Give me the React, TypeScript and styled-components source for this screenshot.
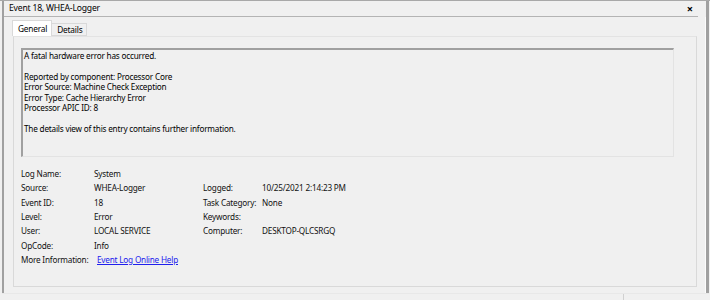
import React from "react";
import styled, { createGlobalStyle } from "styled-components";

const Global = createGlobalStyle`
  html, body { margin: 0; padding: 0; background: #f0f0f0; }
  body { font-family: "Noto Sans", "Open Sans", sans-serif; color: #000; }
`;

const Window = styled.div`
  width: 710px;
  height: 300px;
  box-sizing: border-box;
  background: #f0f0f0;
  display: flex;
  flex-direction: column;
  padding-left: 2px;
  padding-right: 1px;
  border-top: 1px solid #a8a8a8;
  overflow: hidden;
`;

const Frame = styled.div`
  flex: 0 0 292px;
  box-sizing: border-box;
  border-left: 2px solid #a0a0a0;
  border-right: 3px solid #a0a0a0;
  display: flex;
  flex-direction: column;
`;

const Header = styled.div`
  height: 15px;
  margin-right: 8px;
  border-bottom: 1px solid #b4b4b4;
  display: flex;
  align-items: center;
  justify-content: space-between;
  padding: 0 5px 0 5px;
`;

const Title = styled.span`
  font-size: 8.6px;
  letter-spacing: -0.2px;
  line-height: 15px;
  color: #000;
`;

const Close = styled.span`
  font-size: 11px;
  font-weight: bold;
  line-height: 12px;
  color: #000;
`;

const Body = styled.div`
  flex: 1;
  display: flex;
  flex-direction: column;
  padding: 3px 8px 6px 8px;
  border-right: 1px solid #fcfcfc;
`;

const TabRow = styled.div`
  display: flex;
  align-items: flex-end;
  height: 16px;
`;

const Tab = styled.div<{ $active?: boolean }>`
  font-size: 8.3px;
  letter-spacing: -0.2px;
  line-height: 12px;
  padding: 0 4px 0 5px;
  height: ${(p) => (p.$active ? "16px" : "13px")};
  display: flex;
  align-items: center;
  box-sizing: border-box;
  background: ${(p) => (p.$active ? "#ffffff" : "#f0f0f0")};
  border: 1px solid #d9d9d9;
  border-bottom: ${(p) => (p.$active ? "none" : "1px solid #d9d9d9")};
  margin-left: ${(p) => (p.$active ? "0" : "-1px")};
  color: #000;
`;

const Panel = styled.div`
  flex: 1;
  margin-left: 1px;
  border: 1px solid #d9d9d9;
  border-top-color: #e3e3e3;
  background: #f0f0f0;
  padding: 11px 22px 0 7px;
  display: flex;
  flex-direction: column;
`;

const Message = styled.div`
  height: 109px;
  box-sizing: border-box;
  border-top: 2px solid #a0a0a0;
  border-left: 2px solid #a0a0a0;
  border-right: 1px solid #e3e3e3;
  border-bottom: 1px solid #e3e3e3;
  padding: 1px 0 0 1px;
  font-size: 8.2px;
  letter-spacing: -0.2px;
  line-height: 10.4px;
  color: #000;
`;

const Line = styled.div`
  white-space: pre;
  min-height: 10.4px;
`;

const Grid = styled.div`
  display: grid;
  grid-template-columns: 73px 109px 59px 1fr;
  grid-auto-rows: 14.3px;
  margin-top: 10px;
  font-size: 8.2px;
  letter-spacing: -0.2px;
  align-items: center;
  color: #111;
`;

const Cell = styled.span`
  white-space: nowrap;
  line-height: 12px;
`;

const Link = styled.a`
  color: #2020ee;
  text-decoration: underline;
  margin-left: 3px;
  white-space: nowrap;
`;

const Footer = styled.div`
  flex: 1;
  display: grid;
  grid-template-columns: 622px 1fr;
  border-top: 1px solid #e8e8e8;
`;

const FooterCell = styled.div`
  border-right: 1px solid #d0d0d0;
  &:last-child { border-right: none; }
`;

const messageLines = [
  "A fatal hardware error has occurred.",
  "",
  "Reported by component: Processor Core",
  "Error Source: Machine Check Exception",
  "Error Type: Cache Hierarchy Error",
  "Processor APIC ID: 8",
  "",
  "The details view of this entry contains further information.",
];

export default function App() {
  return (
    <>
      <Global />
      <Window>
        <Frame>
          <Header>
            <Title>Event 18, WHEA-Logger</Title>
            <Close>×</Close>
          </Header>
          <Body>
            <TabRow>
              <Tab $active>General</Tab>
              <Tab>Details</Tab>
            </TabRow>
            <Panel>
              <Message>
                {messageLines.map((l, i) => (
                  <Line key={i}>{l}</Line>
                ))}
              </Message>
              <Grid>
                <Cell>Log Name:</Cell>
                <Cell>System</Cell>
                <Cell />
                <Cell />
                <Cell>Source:</Cell>
                <Cell>WHEA-Logger</Cell>
                <Cell>Logged:</Cell>
                <Cell>10/25/2021 2:14:23 PM</Cell>
                <Cell>Event ID:</Cell>
                <Cell>18</Cell>
                <Cell>Task Category:</Cell>
                <Cell>None</Cell>
                <Cell>Level:</Cell>
                <Cell>Error</Cell>
                <Cell>Keywords:</Cell>
                <Cell />
                <Cell>User:</Cell>
                <Cell>LOCAL SERVICE</Cell>
                <Cell>Computer:</Cell>
                <Cell>DESKTOP-QLCSRGQ</Cell>
                <Cell>OpCode:</Cell>
                <Cell>Info</Cell>
                <Cell />
                <Cell />
                <Cell>More Information:</Cell>
                <Cell>
                  <Link href="#">Event Log Online Help</Link>
                </Cell>
                <Cell />
                <Cell />
              </Grid>
            </Panel>
          </Body>
        </Frame>
        <Footer>
          <FooterCell />
          <FooterCell />
        </Footer>
      </Window>
    </>
  );
}
